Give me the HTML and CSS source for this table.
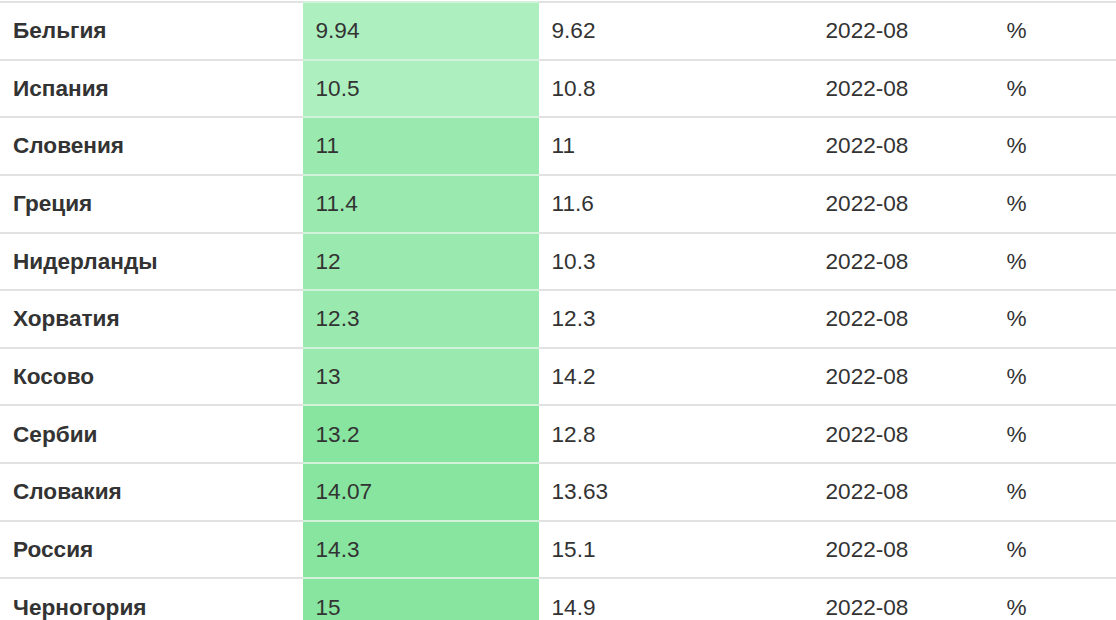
FILE: index.html
```html
<!DOCTYPE html>
<html lang="ru">
<head>
<meta charset="utf-8">
<title>Таблица</title>
<link rel="stylesheet" href="styles.css">
</head>
<body>
<table class="data">
  <colgroup>
    <col class="c-name"><col class="c-val"><col class="c-prev"><col class="c-date"><col class="c-unit">
  </colgroup>
  <tbody>
    <tr><td class="name">Бельгия</td><td class="val g1">9.94</td><td>9.62</td><td>2022-08</td><td>%</td></tr>
    <tr><td class="name">Испания</td><td class="val g1">10.5</td><td>10.8</td><td>2022-08</td><td>%</td></tr>
    <tr><td class="name">Словения</td><td class="val g2">11</td><td>11</td><td>2022-08</td><td>%</td></tr>
    <tr><td class="name">Греция</td><td class="val g2">11.4</td><td>11.6</td><td>2022-08</td><td>%</td></tr>
    <tr><td class="name">Нидерланды</td><td class="val g2">12</td><td>10.3</td><td>2022-08</td><td>%</td></tr>
    <tr><td class="name">Хорватия</td><td class="val g2">12.3</td><td>12.3</td><td>2022-08</td><td>%</td></tr>
    <tr><td class="name">Косово</td><td class="val g2">13</td><td>14.2</td><td>2022-08</td><td>%</td></tr>
    <tr><td class="name">Сербии</td><td class="val g3">13.2</td><td>12.8</td><td>2022-08</td><td>%</td></tr>
    <tr><td class="name">Словакия</td><td class="val g3">14.07</td><td>13.63</td><td>2022-08</td><td>%</td></tr>
    <tr><td class="name">Россия</td><td class="val g3">14.3</td><td>15.1</td><td>2022-08</td><td>%</td></tr>
    <tr><td class="name">Черногория</td><td class="val g3">15</td><td>14.9</td><td>2022-08</td><td>%</td></tr>
  </tbody>
</table>
</body>
</html>
```
FILE: styles.css
```css
html, body {
  margin: 0;
  padding: 0;
  background: #ffffff;
  overflow: hidden;
}
body {
  padding-top: 1px;
  font-family: "Liberation Sans", Arial, sans-serif;
  color: #333333;
}
.data {
  border-collapse: collapse;
  table-layout: fixed;
  width: 1140px;
  font-size: 22.6px;
}
.c-name { width: 303px; }
.c-val { width: 236px; }
.c-prev { width: 274px; }
.c-date { width: 181px; }
.c-unit { width: 146px; }
.data td {
  border-top: 2px solid #e2e2e2;
  padding: 12.2px 12.5px;
  line-height: 31.27px;
  white-space: nowrap;
  vertical-align: top;
}
.data td.name {
  font-weight: bold;
  padding-left: 13px;
}
.data td.val {
  border-top-color: #d2f3da;
}
.g1 { background: #aeefc0; }
.g2 { background: #9aeab0; }
.g3 { background: #87e5a0; }
```
